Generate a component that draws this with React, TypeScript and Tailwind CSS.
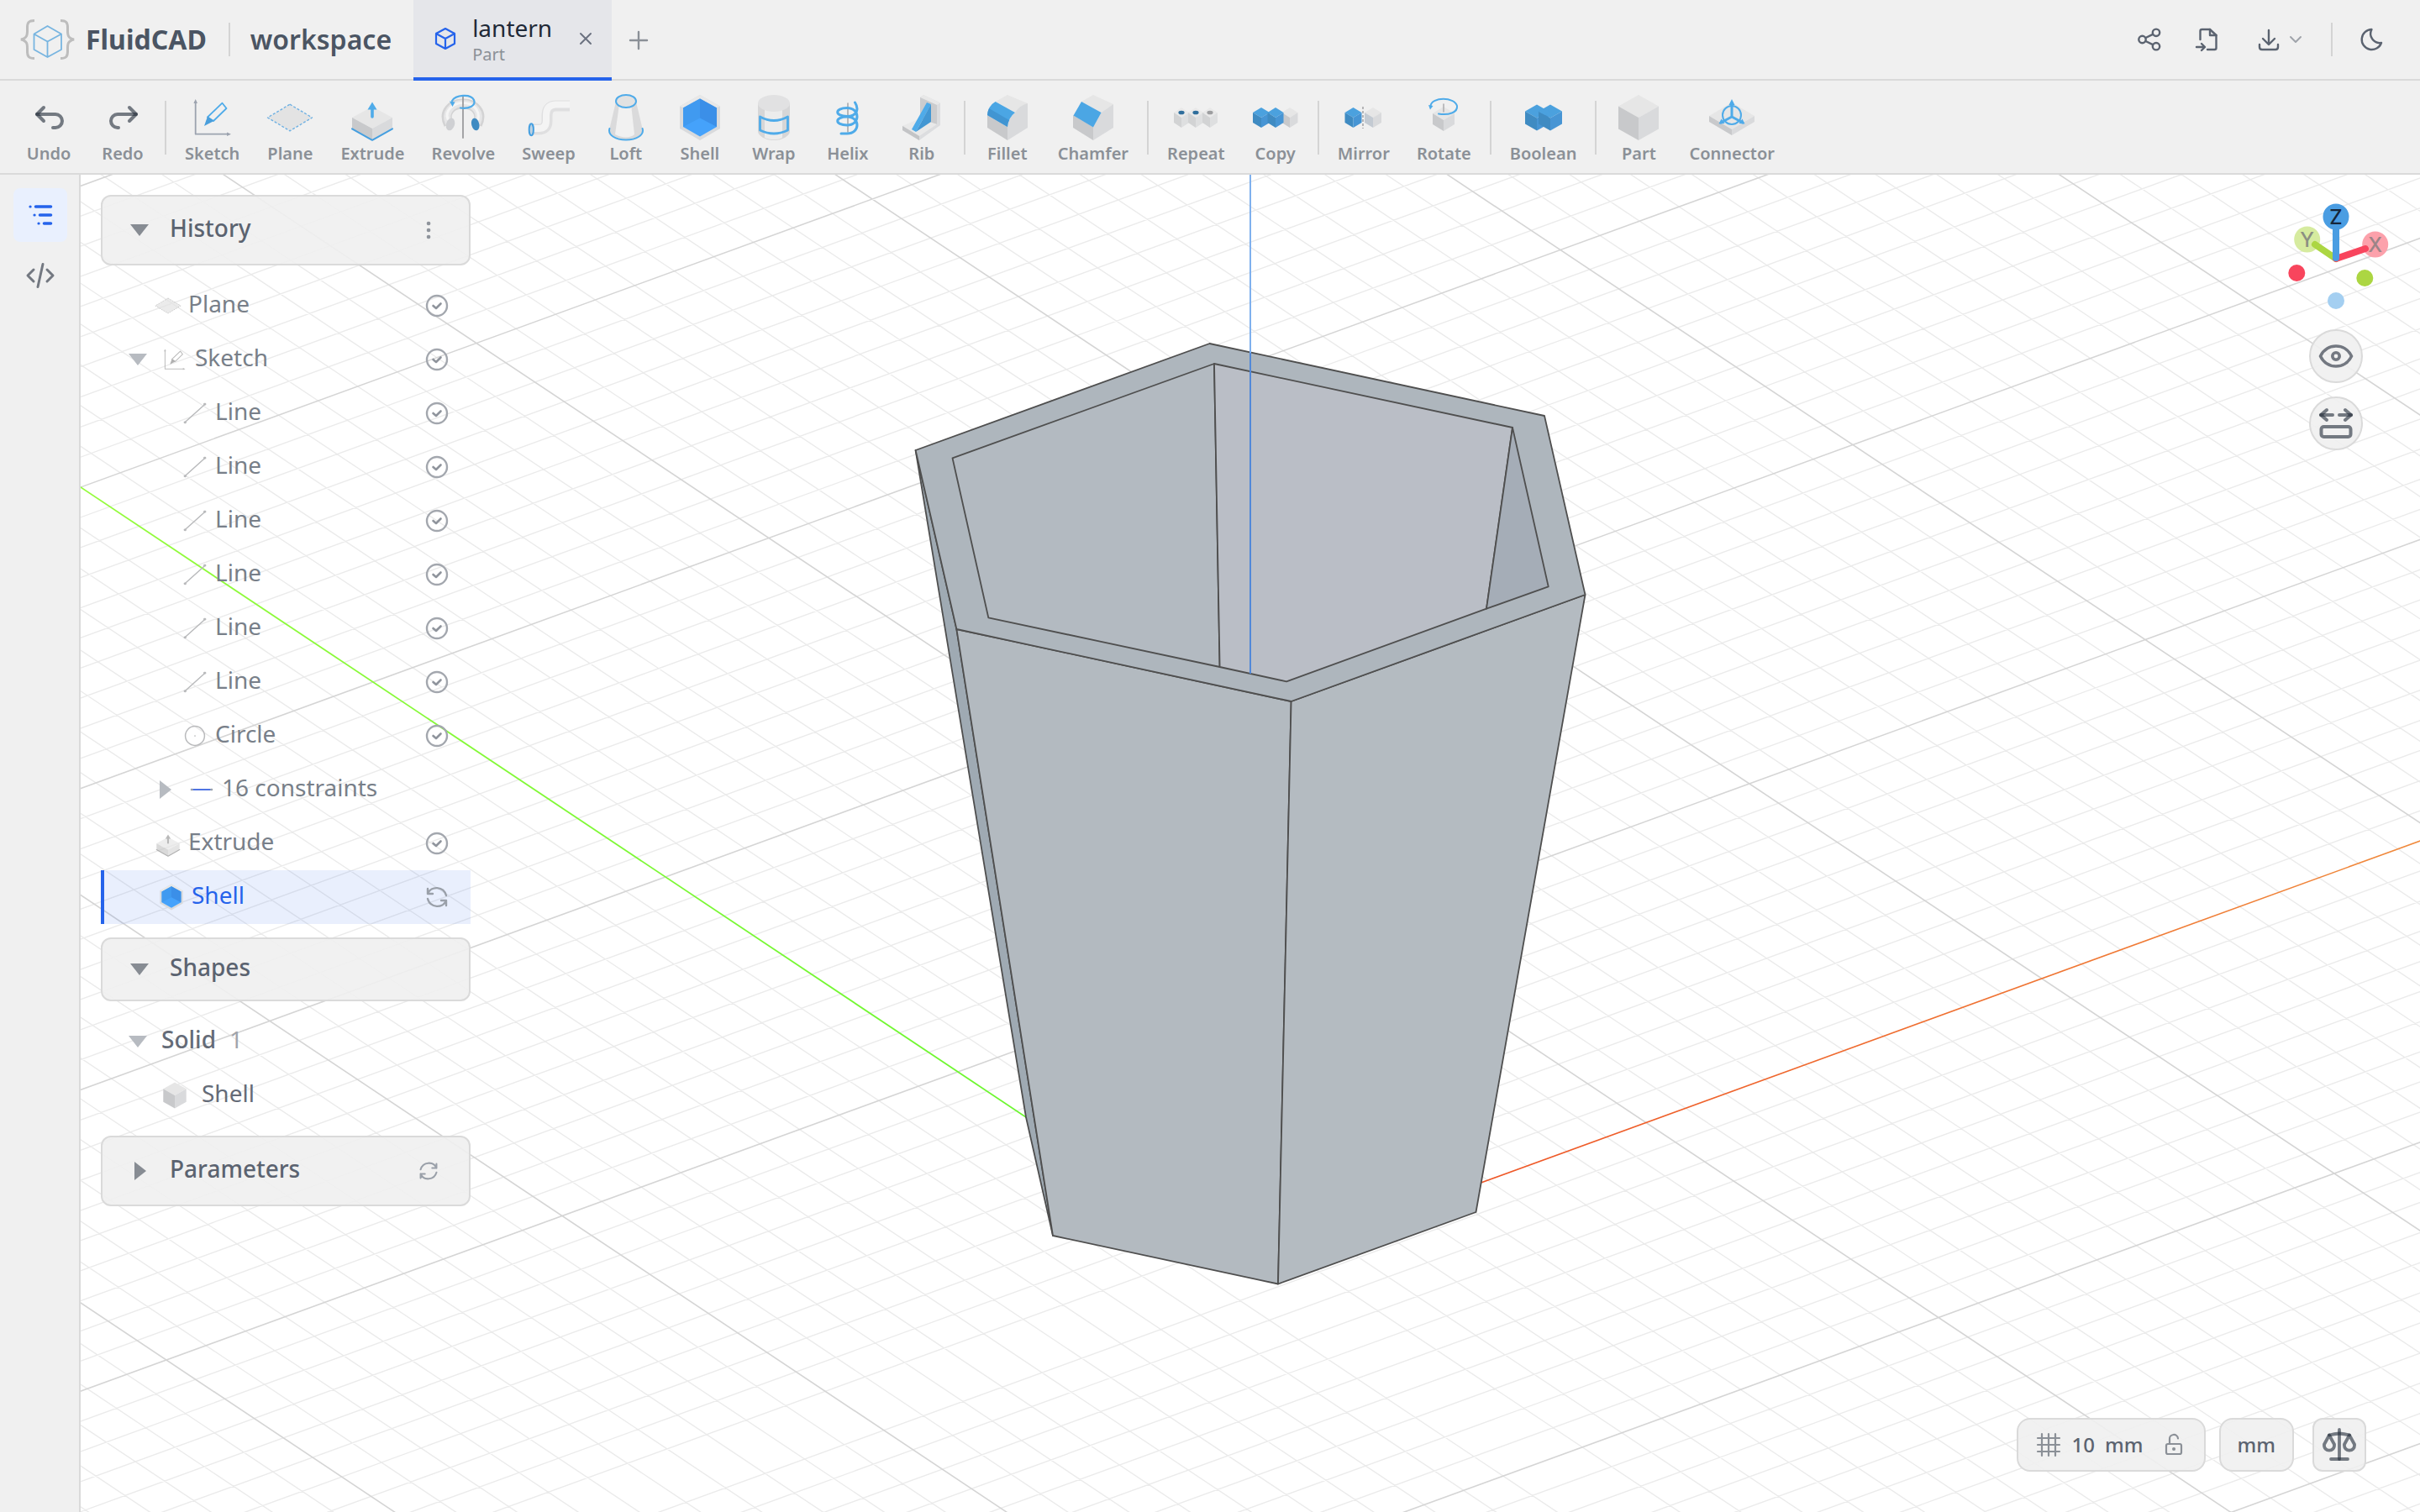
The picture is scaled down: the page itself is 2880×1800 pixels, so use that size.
import { useState } from "react";
import type { ReactNode } from "react";
import clsx from "clsx";

type Tone = { top: string; left: string; right: string };

const GRAY: Tone = { top: "#e6e6e6", left: "#c8c9cb", right: "#d9dadc" };
const LIGHT: Tone = { top: "#e9e9e9", left: "#d2d3d4", right: "#dedfe0" };
const BLUE: Tone = { top: "#4ba1de", left: "#3f8bc2", right: "#4795d4" };

const ACCENT = "#4fabe9";
const INK = "rgba(31,41,55,0.6)";

/* ---------- shared drawing parts ---------- */

// Isometric box: hw is the half width, rise the height of the top rhombus' half.
function Box({
  cx,
  top,
  hw,
  rise,
  height,
  tone = GRAY,
}: {
  cx: number;
  top: number;
  hw: number;
  rise: number;
  height: number;
  tone?: Tone;
}) {
  const l = cx - hw;
  const r = cx + hw;
  const side = top + rise;
  const mid = top + rise * 2;
  return (
    <g>
      <path d={`M${cx} ${top}L${r} ${side}L${cx} ${mid}L${l} ${side}Z`} fill={tone.top} />
      <path d={`M${l} ${side}L${cx} ${mid}V${mid + height}L${l} ${side + height}Z`} fill={tone.left} />
      <path d={`M${r} ${side}L${cx} ${mid}V${mid + height}L${r} ${side + height}Z`} fill={tone.right} />
    </g>
  );
}

function Icon({
  children,
  size = 56,
  className,
}: {
  children: ReactNode;
  size?: number;
  className?: string;
}) {
  return (
    <svg
      viewBox={`0 0 ${size} ${size}`}
      fill="none"
      strokeLinecap="round"
      strokeLinejoin="round"
      className={clsx("shrink-0", className)}
      aria-hidden="true"
    >
      {children}
    </svg>
  );
}

/* ---------- tool drawings, all on a 56 unit square ---------- */

const drawings: Record<string, ReactNode> = {
  Undo: (
    <g stroke={INK} strokeWidth="4">
      <path d="M22 16L14 24L22 32" />
      <path d="M14 24H36a8 8 0 0 1 0 16H33" />
    </g>
  ),
  Redo: (
    <g stroke={INK} strokeWidth="4">
      <path d="M36 16L44 24L36 32" />
      <path d="M44 24H22a8 8 0 0 0 0 16H23" />
    </g>
  ),
  Sketch: (
    <g>
      <path d="M7.7 9V47.7H47" stroke="#9ca3af" strokeWidth="1.8" />
      <path d="M7.7 6L10 11H5.4Z M50 47.7L45 50V45.4Z" fill="#9ca3af" />
      <path d="M39.5 10.7L44.5 17L29 32L22 27.5Z" stroke={ACCENT} strokeWidth="1.8" />
      <path d="M22 26.5L29.5 32L18 38Z" fill="#4a9fdc" />
    </g>
  ),
  Plane: (
    <path
      d="M28 12.2L54.5 28L28 43.8L1.5 28Z"
      fill="#e3e3e3"
      stroke="#6fb1e3"
      strokeWidth="1.4"
      strokeDasharray="3 2"
      strokeLinecap="butt"
    />
  ),
  Extrude: (
    <g>
      <Box cx={28} top={15} hw={24} rise={13} height={13.5} />
      <path d="M4 41.3L28 54.8L52 41.3" stroke="#459fe0" strokeWidth="2" />
      <path d="M28 27V16" stroke={ACCENT} strokeWidth="3.6" />
      <path d="M28 9.5L33.5 18.5H22.5Z" fill={ACCENT} />
    </g>
  ),
  Revolve: (
    <g>
      <path d="M11 36C4 22 14 11.5 28 11.5S52 22 45 36" stroke="#d3d3d4" strokeWidth="12" strokeLinecap="butt" />
      <path d="M11 35C5 22 15 11 28 11S51 22 45 35" stroke="#e6e6e7" strokeWidth="8" strokeLinecap="butt" />
      <path d="M10 30C6 20 16 10.5 28 10.5S48 19 46 30" stroke="#f5f5f5" strokeWidth="3" />
      <ellipse cx="13" cy="36" rx="5" ry="7.5" fill="#cfd0d3" transform="rotate(18 13 36)" />
      <ellipse cx="42.7" cy="36" rx="4.6" ry="7.5" fill="#3f8bc2" transform="rotate(-14 42.7 36)" />
      <path d="M28 3V52" stroke="#9b9b9d" strokeWidth="1.8" />
      <path d="M15 8C19 1 37 -1 41 7C44 14 34 18 25 16.5" stroke={ACCENT} strokeWidth="2.2" />
      <path d="M12 8.5L18.5 9.5L15.5 15Z" fill={ACCENT} />
    </g>
  ),
  Sweep: (
    <g strokeLinecap="butt">
      <path d="M8 42H16Q26 42 26 32V26Q26 14.5 36 14H53" stroke="#dfdfe0" strokeWidth="13" />
      <path d="M8 41H16Q25 41 25 32V25Q25 13 36 12.5H53" stroke="#f4f4f4" strokeWidth="8" />
      <ellipse cx="7.3" cy="42.3" rx="2.6" ry="7" fill="#bfd3e2" stroke="#459fe0" strokeWidth="2" />
    </g>
  ),
  Loft: (
    <g>
      <path d="M16 9L8 43C10 50 18 54 28 54S46 50 48 43L40 9Z" fill="#dadadb" />
      <path d="M20 12L15 48C24 53 34 52 38 48L34 12Z" fill="#f1f1f1" />
      <path d="M8.4 41C6 49 16 54.5 28 54.5S50 49 47.6 41" stroke={ACCENT} strokeWidth="2" />
      <ellipse cx="28" cy="8.5" rx="12" ry="7.5" fill="#e2e2e2" stroke={ACCENT} strokeWidth="2" />
    </g>
  ),
  Shell: (
    <g>
      <path d="M28 1L52 14.5V41L28 55L4 41V14.5Z" fill="#d9dadc" />
      <path d="M28 1L52 14.5L48 16L28 5L8 16L4 14.5Z" fill="#e8e8e8" />
      <path d="M28 5.5L48 16.5V39L28 50.5L8 39V16.5Z" fill="#45a2fb" />
      <path d="M28 5.5L8 16.5V39L28 28.5Z" fill="#409af0" />
      <path d="M28 5.5L48 16.5V39L28 28.5Z" fill="#3b8fe8" />
    </g>
  ),
  Wrap: (
    <g>
      <path d="M9 11V44C9 50 18 55 28 55S47 50 47 44V11Z" fill="#d6d6d7" />
      <path d="M17 14V52C24 55 32 55 38 52V14Z" fill="#ececec" />
      <ellipse cx="28" cy="11" rx="19" ry="10" fill="#e1e1e2" />
      <path d="M11.5 27Q28 36 44.5 27V43Q28 51 11.5 43Z" stroke={ACCENT} strokeWidth="2.8" />
    </g>
  ),
  Helix: (
    <g>
      <path d="M28 11V45" stroke="#a9a9ab" strokeWidth="1.6" />
      <path
        d="M36.5 10C41 17 40 26.5 27 26.5C12 26.5 12 16.5 27 16.5C43 16.5 43 37 27 37C12 37 12 27 27 27C43 27 43 47 27 47H20"
        stroke={ACCENT}
        strokeWidth="3"
      />
    </g>
  ),
  Rib: (
    <g>
      <path d="M30 1L50 10.5V37L25 55L5 43V38L26 31V4Z" fill="#dcdddf" />
      <path d="M30 1L50 10.5L46 13L26 4Z" fill="#e8e8e8" />
      <path d="M26 4L46 13V36L26 31Z" fill="#cbccce" />
      <path d="M5 38L26 29L46 36L25 50Z" fill="#e9e9e9" />
      <path d="M5 38L25 50V55L5 43Z" fill="#c3c4c6" />
      <path d="M34 10L16 42L21 45L39 12Z" fill={ACCENT} />
      <path d="M39 12V33L21 45Z" fill="#4397d3" />
    </g>
  ),
  Fillet: (
    <g>
      <path d="M13.6 9L28 1L52 11L37 22Z" fill="#e6e6e6" />
      <path d="M52 11V40L28 55V39Q29 28 37 22Q43 13 52 11Z" fill="#d9dadc" />
      <path d="M4 25L28 39V55L4 40Z" fill="#c8c9cb" />
      <path d="M13.6 9L37 22Q29 28 28 39L4 25Q5 14 13.6 9Z" fill="#4ba6e4" />
      <path d="M4 25Q4.5 20 6 17L30 31Q28 34 28 39Z" fill="#4195d2" />
    </g>
  ),
  Chamfer: (
    <g>
      <path d="M14 9L28 1L52 12L37.6 22Z" fill="#e6e6e6" />
      <path d="M52 12V40L28 55V39L37.6 22Z" fill="#d9dadc" />
      <path d="M4 25L28 39V55L4 40Z" fill="#c8c9cb" />
      <path d="M14 9L37.6 22L28 39.5L4.5 25.5Z" fill="#4ba6e4" />
    </g>
  ),
  Repeat: (
    <g>
      {[11, 28, 45].map((cx) => (
        <g key={cx}>
          <Box cx={cx} top={16} hw={9} rise={6} height={12} tone={LIGHT} />
          <ellipse cx={cx} cy="22" rx="3.6" ry="2.3" fill={cx === 45 ? "#9d9ea0" : "#2f6e9c"} />
        </g>
      ))}
    </g>
  ),
  Copy: (
    <g>
      <Box cx={45} top={16} hw={9.5} rise={6} height={12} />
      <Box cx={11} top={16} hw={10} rise={6} height={12} tone={BLUE} />
      <Box cx={28} top={16} hw={9.5} rise={6} height={12} tone={BLUE} />
    </g>
  ),
  Mirror: (
    <g>
      <Box cx={15.5} top={16} hw={10} rise={6} height={12} tone={BLUE} />
      <path d="M27 15V41" stroke="#b4b4b6" strokeWidth="2" strokeDasharray="3 2" strokeLinecap="butt" />
      <Box cx={39} top={16} hw={10} rise={6} height={12} tone={{ ...GRAY, left: "#c3cad2" }} />
    </g>
  ),
  Rotate: (
    <g>
      <Box cx={28} top={15} hw={13} rise={8} height={13} />
      <path d="M28 12V21" stroke="#b0b0b2" strokeWidth="1.6" />
      <path d="M12.5 14C14 3 41 3 44 14C45 22 34 25.5 22 23.5" stroke={ACCENT} strokeWidth="2" />
      <path d="M10 13L15.5 14L12 18.5Z" fill={ACCENT} />
    </g>
  ),
  Boolean: (
    <g>
      <Box cx={20} top={12.5} hw={14} rise={8} height={15} tone={BLUE} />
      <Box cx={36} top={12.5} hw={14} rise={8} height={15} tone={BLUE} />
      <path d="M28 17.5L36 21L30 25L22 21Z" fill={BLUE.top} />
    </g>
  ),
  Part: <Box cx={28} top={1} hw={24} rise={13.5} height={27} />,
  Connector: (
    <g>
      <Box cx={28} top={10} hw={27} rise={16} height={7} />
      <circle cx="28" cy="25" r="11" stroke={ACCENT} strokeWidth="2" />
      <path d="M28 27V10M28 27L15 34M28 27L41 34" stroke={ACCENT} strokeWidth="3" />
      <path d="M28 6L31.5 13H24.5Z M12.5 35.5L15.5 29.5L19.5 35Z M43.5 35.5L40.5 29.5L36.5 35Z" fill={ACCENT} />
    </g>
  ),
  Line: (
    <g stroke="#b9babc" strokeWidth="2.6">
      <path d="M8 46L48 10" />
      <path d="M7 47H8M48 9H49" strokeWidth="5" />
    </g>
  ),
  Circle: (
    <g stroke="#b9babc" strokeWidth="2.6">
      <circle cx="28" cy="28" r="20" />
      <path d="M28 28H28.1" strokeWidth="3" />
    </g>
  ),
  Constraint: (
    <g strokeWidth="3.6">
      <path d="M8 28H48" stroke="#4f74e3" />
      <path d="M7 28H8M48 28H49" stroke="#9ca3af" strokeWidth="4.6" />
    </g>
  ),
};

function ToolIcon({ name, className }: { name: string; className?: string }) {
  return <Icon className={className}>{drawings[name]}</Icon>;
}

/* ---------- header ---------- */

function Logo() {
  return (
    <svg viewBox="0 0 66 50" fill="none" className="h-[50px] w-[66px] shrink-0" aria-hidden="true">
      <g stroke="#bdbdbd" strokeWidth="3">
        <path d="M17 2.5C10 2.5 8.5 5 8.5 11C8.5 18 9.5 23 1 25C9.5 27 8.5 32 8.5 39C8.5 45 10 47.5 17 47.5" />
        <path d="M48 2.5C55 2.5 56.5 5 56.5 11C56.5 18 55.5 23 64 25C55.5 27 56.5 32 56.5 39C56.5 45 55 47.5 48 47.5" />
      </g>
      <path
        d="M32.5 9L49 18.5V37L32.5 46L16.5 37V18.5ZM16.5 18.5L32.5 27.5L49 18.5M32.5 27.5V46"
        stroke="#78b5e0"
        strokeWidth="1.8"
        strokeLinejoin="round"
      />
    </svg>
  );
}

function HeaderButton({ label, children }: { label: string; children: ReactNode }) {
  return (
    <button aria-label={label} className="flex h-14 items-center justify-center px-2">
      {children}
    </button>
  );
}

function Header() {
  return (
    <header className="flex h-24 shrink-0 items-stretch border-b-2 border-[#dadada]">
      <div className="flex items-center pl-6">
        <Logo />
        <span className="ml-3 text-[32px] leading-10 font-bold text-[#4b5563]">FluidCAD</span>
        <span className="mr-6 ml-[26px] h-10 w-[2px] bg-[#d4d4d4]" />
        <span className="text-[32px] leading-10 font-semibold text-[#4b5563]">workspace</span>
      </div>

      <nav className="-mb-[2px] ml-[26px] flex items-center" aria-label="Open files">
        <div className="flex h-full w-[236px] items-center border-b-4 border-[#2563eb] bg-[#e5e6ea] pl-6">
          <Icon size={28} className="h-7 w-7">
            <path
              d="M14 2L25 8V20L14 26L3 20V8ZM3 8L14 14L25 8M14 14V26"
              stroke="#2563eb"
              strokeWidth="2.2"
            />
          </Icon>
          <a href="#lantern" className="ml-[18px] flex flex-col gap-0.5">
            <span className="text-[28px] leading-9 text-[#1f2937]">lantern</span>
            <span className="text-[20px] leading-6 text-[#8b9097]">Part</span>
          </a>
          <button aria-label="Close lantern" className="ml-6 flex h-8 w-8 items-center justify-center">
            <Icon size={16} className="h-4 w-4">
              <path d="M2 2L14 14M14 2L2 14" stroke="#6b7280" strokeWidth="2" />
            </Icon>
          </button>
        </div>
        <button aria-label="New file" className="flex h-16 w-16 items-center justify-center">
          <Icon size={24} className="h-6 w-6">
            <path d="M12 2V22M2 12H22" stroke="#8b9097" strokeWidth="2.4" />
          </Icon>
        </button>
      </nav>

      <div className="ml-auto flex items-center pr-8">
        <HeaderButton label="Share">
          <Icon size={36} className="h-9 w-9">
            <g stroke="#5b6370" strokeWidth="2.4">
              <circle cx="9.5" cy="18" r="4.2" />
              <circle cx="26" cy="9.8" r="4.2" />
              <circle cx="26" cy="26.2" r="4.2" />
              <path d="M13.5 16L22 11.8M13.5 20L22 24.2" />
            </g>
          </Icon>
        </HeaderButton>
        <div className="ml-4">
          <HeaderButton label="Import">
            <Icon size={36} className="h-9 w-9">
              <g stroke="#5b6370" strokeWidth="2.4">
                <path d="M10.5 18V8Q10.5 6 12.5 6H22L29.5 13V28Q29.5 30 27.5 30H19" />
                <path d="M22 6V13H29.5M6 27H15M12 23L16 27L12 31" />
              </g>
            </Icon>
          </HeaderButton>
        </div>
        <div className="ml-[22px]">
          <HeaderButton label="Download">
            <Icon size={36} className="h-9 w-9">
              <g stroke="#5b6370" strokeWidth="2.4">
                <path d="M18 7V23M11 17L18 24L25 17" />
                <path d="M7 24V27Q7 30 10 30H26Q29 30 29 27V24" />
              </g>
            </Icon>
            <Icon size={16} className="ml-1.5 h-4 w-4">
              <path d="M2 5L8 11L14 5" stroke="#a0a4ab" strokeWidth="2" />
            </Icon>
          </HeaderButton>
        </div>
        <span className="ml-[26px] h-10 w-[2px] bg-[#d4d4d4]" />
        <div className="ml-5">
          <HeaderButton label="Dark theme">
            <Icon size={36} className="h-9 w-9">
              <path
                d="M18.5 6A12 12 0 1 0 30 22A11 11 0 0 1 18.5 6Z"
                stroke="#5b6370"
                strokeWidth="2.4"
              />
            </Icon>
          </HeaderButton>
        </div>
      </div>
    </header>
  );
}

/* ---------- toolbar ---------- */

const toolGroups = [
  ["Undo", "Redo"],
  ["Sketch", "Plane", "Extrude", "Revolve", "Sweep", "Loft", "Shell", "Wrap", "Helix", "Rib"],
  ["Fillet", "Chamfer"],
  ["Repeat", "Copy"],
  ["Mirror", "Rotate"],
  ["Boolean"],
  ["Part", "Connector"],
];

function Toolbar() {
  return (
    <div role="toolbar" className="flex shrink-0 items-center border-b-2 border-[#dadada] px-4 pt-2 pb-1.5">
      {toolGroups.map((group, i) => (
        <div key={group[0]} className="flex items-center">
          {i > 0 && <span className="mx-2 h-16 w-[2px] bg-[#d4d4d4]" />}
          <div className="flex gap-1">
            {group.map((name) => (
              <button
                key={name}
                className="flex min-w-[84px] flex-col items-center gap-[5px] rounded-lg px-3.5 pt-2 pb-[7px]"
              >
                <ToolIcon name={name} className="h-14 w-14" />
                <span className="text-[20px] leading-5 font-semibold text-[#8b9097]">{name}</span>
              </button>
            ))}
          </div>
        </div>
      ))}
    </div>
  );
}

/* ---------- left rail ---------- */

function Rail() {
  return (
    <aside className="flex w-24 shrink-0 flex-col gap-2 border-r-2 border-[#dadada] bg-[#f0f0f0] pt-4 pl-4">
      <button aria-label="Feature tree" className="flex h-16 w-16 items-center justify-center rounded-lg bg-[#e9f0fe]">
        <Icon size={32} className="h-8 w-8">
          <g stroke="#2563eb" strokeWidth="3.6">
            <path d="M10.5 6H28.5M15.5 16H28.5M20.5 26H28.5" />
            <path d="M4 6H4.1M9 16H9.1M14 26H14.1" strokeWidth="3.2" />
          </g>
        </Icon>
      </button>
      <button aria-label="Code" className="flex h-16 w-16 items-center justify-center rounded-lg">
        <Icon size={36} className="h-9 w-9">
          <g stroke="#737881" strokeWidth="3">
            <path d="M10 11L3 18L10 25M26 11L33 18L26 25M21 4.5L15 31.5" />
          </g>
        </Icon>
      </button>
    </aside>
  );
}

/* ---------- side panels ---------- */

function Caret({ open, className }: { open: boolean; className?: string }) {
  return (
    <svg viewBox="0 0 24 24" className={clsx("h-6 w-6 shrink-0", className)} aria-hidden="true">
      <path d={open ? "M1 5H23L12 19Z" : "M6 1L20 12L6 23Z"} fill="currentColor" />
    </svg>
  );
}

function CheckIcon() {
  return (
    <Icon size={28} className="h-7 w-7">
      <circle cx="14" cy="14" r="12" stroke="#a3a7ae" strokeWidth="2.4" />
      <path d="M9.5 14L13 17L18.5 11.5" stroke="#8f949c" strokeWidth="2.6" />
    </Icon>
  );
}

function SyncIcon({ className }: { className?: string }) {
  return (
    <Icon size={28} className={className}>
      <g stroke="#9aa0a9" strokeWidth="2.4">
        <path d="M3 12C6 1 21 0 25 10M25 4V10H19" />
        <path d="M25 16C22 27 7 28 3 18M3 24V18H9" />
      </g>
    </Icon>
  );
}

function PanelHeader({
  title,
  open,
  onToggle,
  tall = true,
  action,
}: {
  title: string;
  open: boolean;
  onToggle: () => void;
  tall?: boolean;
  action?: ReactNode;
}) {
  return (
    <div
      className={clsx(
        "flex items-center rounded-xl border-2 border-[#dadada] bg-[#f0f0f0]/90 pr-8",
        tall ? "h-[84px]" : "h-[76px]"
      )}
    >
      <button onClick={onToggle} aria-expanded={open} className="flex flex-1 items-center pl-8">
        <Caret open={open} className="text-[#878c93]" />
        <span className="ml-6 pb-1.5 text-[28px] leading-9 font-medium text-[#5b6370]">{title}</span>
      </button>
      {action}
    </div>
  );
}

type Row = { name: string; icon: string; indent: string; muted?: boolean };

const historyRows: Row[] = [
  { name: "Line", icon: "Line", indent: "pl-24" },
  { name: "Line", icon: "Line", indent: "pl-24" },
  { name: "Line", icon: "Line", indent: "pl-24" },
  { name: "Line", icon: "Line", indent: "pl-24" },
  { name: "Line", icon: "Line", indent: "pl-24" },
  { name: "Line", icon: "Line", indent: "pl-24" },
  { name: "Circle", icon: "Circle", indent: "pl-24" },
];

function FeatureRow({
  name,
  icon,
  indent,
  muted,
  lead,
  state = <CheckIcon />,
}: Row & { lead?: ReactNode; state?: ReactNode }) {
  return (
    <li className={clsx("flex h-16 items-center pr-[26px] text-[#787f89]", indent)}>
      {lead}
      <ToolIcon name={icon} className={clsx("h-8 w-8", muted && "opacity-70 grayscale")} />
      <span className="ml-2 flex-1 pb-1.5 text-[28px] leading-9">{name}</span>
      {state}
    </li>
  );
}

function SidePanels() {
  const [historyOpen, setHistoryOpen] = useState(true);
  const [shapesOpen, setShapesOpen] = useState(true);
  const [paramsOpen, setParamsOpen] = useState(false);

  return (
    <div className="relative m-6 flex w-[440px] flex-col gap-4">
      <PanelHeader
        title="History"
        open={historyOpen}
        onToggle={() => setHistoryOpen(!historyOpen)}
        action={
          <button aria-label="History options" className="flex h-8 w-8 items-center justify-center">
            <Icon size={28} className="h-7 w-7">
              <path d="M14 6H14.1M14 14H14.1M14 22H14.1" stroke="#8f949c" strokeWidth="4.6" />
            </Icon>
          </button>
        }
      />
      {historyOpen && (
        <ul>
          <FeatureRow name="Plane" icon="Plane" indent="pl-16" muted />
          <FeatureRow
            name="Sketch"
            icon="Sketch"
            indent="pl-8"
            muted
            lead={<Caret open className="mr-4 text-[#b7bbc1]" />}
          />
          {historyRows.map((row, i) => (
            <FeatureRow key={i} {...row} />
          ))}
          <FeatureRow
            name="16 constraints"
            icon="Constraint"
            indent="pl-16"
            lead={<Caret open={false} className="mr-4 text-[#b7bbc1]" />}
            state={null}
          />
          <FeatureRow name="Extrude" icon="Extrude" indent="pl-16" muted />
          <li className="flex h-16 items-center border-l-4 border-[#2563eb] bg-[#2563eb]/10 pr-[26px] pl-16 text-[#2563eb]">
            <ToolIcon name="Shell" className="h-8 w-8" />
            <span className="ml-2 flex-1 pb-1.5 text-[28px] leading-9">Shell</span>
            <SyncIcon className="h-7 w-7 -scale-x-100" />
          </li>
        </ul>
      )}

      <PanelHeader title="Shapes" open={shapesOpen} onToggle={() => setShapesOpen(!shapesOpen)} tall={false} />
      {shapesOpen && (
        <ul className="text-[28px] leading-9 text-[#646b77]">
          <li className="flex h-16 items-center pl-8">
            <Caret open className="text-[#b7bbc1]" />
            <span className="ml-4 pb-1.5 font-medium">Solid</span>
            <span className="ml-4 pb-1.5 text-[#a0a4ab]">1</span>
          </li>
          <li className="flex h-16 items-center pl-[72px]">
            <ToolIcon name="Part" className="h-8 w-8" />
            <span className="ml-4 pb-1.5">Shell</span>
          </li>
        </ul>
      )}

      <PanelHeader
        title="Parameters"
        open={paramsOpen}
        onToggle={() => setParamsOpen(!paramsOpen)}
        action={
          <button aria-label="Refresh parameters" className="flex h-8 w-8 items-center justify-center">
            <SyncIcon className="h-6 w-6" />
          </button>
        }
      />
    </div>
  );
}

/* ---------- 3D scene ---------- */

// Orthographic projection of the ground plane; one step is a major grid cell.
const ORIGIN = [1488, 1508];
const STEP_X = [471, -171.5];
const STEP_Y = [-348, -232];

function project(x: number, y: number) {
  return `${(ORIGIN[0] + x * STEP_X[0] + y * STEP_Y[0]).toFixed(1)} ${(
    ORIGIN[1] +
    x * STEP_X[1] +
    y * STEP_Y[1]
  ).toFixed(1)}`;
}

function gridPath(major: boolean) {
  const parts: string[] = [];
  for (let i = -60; i <= 60; i++) {
    if (i === 0 || (i % 10 === 0) !== major) continue;
    const t = i / 10;
    parts.push(`M${project(t, -6)}L${project(t, 8)}`);
    parts.push(`M${project(-8, t)}L${project(8, t)}`);
  }
  return parts.join("");
}

const minorGrid = gridPath(false);
const majorGrid = gridPath(true);

function Scene() {
  return (
    <svg
      viewBox="96 208 2784 1592"
      preserveAspectRatio="xMidYMid slice"
      className="absolute inset-0 h-full w-full"
      role="img"
      aria-label="Hexagonal lantern model"
    >
      <defs>
        <linearGradient id="xAxis" gradientUnits="userSpaceOnUse" x1="1488" y1="0" x2="2880" y2="0">
          <stop offset="0" stopColor="#ee4a22" />
          <stop offset="1" stopColor="#f08a3c" />
        </linearGradient>
        <linearGradient id="yAxis" gradientUnits="userSpaceOnUse" x1="96" y1="0" x2="1488" y2="0">
          <stop offset="0" stopColor="#95fb3c" />
          <stop offset="1" stopColor="#62f52c" />
        </linearGradient>
      </defs>

      <g fill="none">
        <path d={minorGrid} stroke="#ebebeb" strokeWidth="1.4" />
        <path d={majorGrid} stroke="#d5d5d5" strokeWidth="1.6" />
        <path d={`M${project(0, 0)}L${project(4, 0)}`} stroke="url(#xAxis)" strokeWidth="1.6" />
        <path d={`M${project(0, 0)}L${project(0, 5)}`} stroke="url(#yAxis)" strokeWidth="1.8" />
      </g>

      <g stroke="#4f4f4f" strokeWidth="1.8" strokeLinejoin="round">
        <path d="M1089.6 536L1138.4 749L1253 1471L1221 1330Z" fill="#9faab3" />
        <path d="M1138.4 749L1536.6 835L1521 1528.5L1253 1471Z" fill="#b3bac0" />
        <path d="M1536.6 835L1886.5 708L1756.5 1443L1521 1528.5Z" fill="#b4bbc1" />
        <path d="M1439.5 409L1838 495L1886.5 708L1536.6 835L1138.4 749L1089.6 536Z" fill="#aeb6bd" />
        <path d="M1445 433L1451.6 794L1176.3 735.3L1133.5 545.3Z" fill="#b3bac1" />
        <path d="M1445 433L1800 509L1769 724.7L1531 811.3L1451.6 794Z" fill="#babec6" />
        <path d="M1800 509L1842.7 698.3L1769 724.7Z" fill="#a5adb7" />
      </g>

      <path d="M1488 208V420" stroke="#7fb0ee" strokeWidth="2" />
      <path d="M1488 420V802" stroke="#5288d8" strokeWidth="2" />
    </svg>
  );
}

/* ---------- viewport overlays ---------- */

function AxisGizmo() {
  return (
    <svg viewBox="0 0 140 140" className="h-[140px] w-[140px]" role="img" aria-label="View orientation">
      <circle cx="35.7" cy="45" r="15.5" fill="#d6eb9f" />
      <circle cx="116.7" cy="51" r="15.5" fill="#fca1ab" />
      <g strokeWidth="8" strokeLinecap="round">
        <path d="M70 68L45 51" stroke="#acd642" />
        <path d="M70 68L105 56" stroke="#f8455d" />
        <path d="M70 67V20" stroke="#4a9de2" />
      </g>
      <circle cx="70" cy="18" r="15.5" fill="#4a9de2" />
      <circle cx="23.3" cy="85" r="10" fill="#f8455d" />
      <circle cx="104.3" cy="91" r="10" fill="#acd642" />
      <circle cx="70" cy="118" r="10" fill="#a4cff1" />
      <g textAnchor="middle" fontSize="24" className="font-[Inter]" fontWeight="500">
        <text x="70" y="27" fill="#16263a">Z</text>
        <text x="35.7" y="54" fill="#8b8f82">Y</text>
        <text x="116.7" y="60" fill="#9c8487">X</text>
      </g>
    </svg>
  );
}

function ViewControls() {
  const round =
    "flex h-16 w-16 items-center justify-center rounded-full border-2 border-[#dadada] bg-[#f0f0f0]/90";
  return (
    <div className="relative mt-8 mr-[30px] flex flex-col items-center gap-3 self-start">
      <AxisGizmo />
      <div className="flex flex-col gap-4">
        <button aria-label="Display mode" className={round}>
          <Icon size={44} className="h-11 w-11">
            <g stroke="#737881" strokeWidth="3.6">
              <path d="M3.5 22C11 6 33 6 40.5 22C33 38 11 38 3.5 22Z" />
              <circle cx="22" cy="22" r="4.2" />
            </g>
          </Icon>
        </button>
        <button aria-label="Measure" className={round}>
          <Icon size={44} className="h-11 w-11">
            <g stroke={INK} strokeWidth="4">
              <path d="M11 6L4 12L11 18" />
              <path d="M4 12H18" />
              <path d="M33 6L40 12L33 18" />
              <path d="M40 12H26" />
              <rect x="4.5" y="26" width="35" height="12" rx="3" />
            </g>
          </Icon>
        </button>
      </div>
    </div>
  );
}

function StatusControls() {
  const pill =
    "flex h-16 items-center border-2 border-[#dadada] bg-[#f0f0f0]/90 text-[24px] leading-8 font-medium text-[#5b6370]";
  return (
    <div className="absolute right-16 bottom-12 flex items-center">
      <button aria-label="Grid size 10 mm" className={clsx(pill, "rounded-2xl px-5")}>
        <Icon size={32} className="h-8 w-8">
          <path
            d="M8 3V29M16 3V29M24 3V29M3 8H29M3 16H29M3 24H29"
            stroke="#8b9097"
            strokeWidth="2.2"
          />
        </Icon>
        <span className="ml-3">10</span>
        <span className="ml-3">mm</span>
        <Icon size={32} className="ml-5 h-8 w-8">
          <g stroke="#8b9097" strokeWidth="2.2">
            <rect x="7" y="15" width="18" height="12" rx="2" />
            <path d="M11 15V9.5A5 5 0 0 1 21 8.5" />
            <path d="M16 21H16.1" strokeWidth="4" />
          </g>
        </Icon>
      </button>
      <button aria-label="Units" className={clsx(pill, "ml-4 rounded-2xl px-5")}>
        mm
      </button>
      <button aria-label="Mass properties" className={clsx(pill, "ml-[22px] w-16 justify-center rounded-xl")}>
        <Icon size={44} className="h-11 w-11">
          <g stroke={INK} strokeWidth="3.8">
            <path d="M22 4V39" />
            <path d="M12 39H32" />
            <path d="M10 10.5Q16 9 22 8.5Q28 9 34 10.5" />
            <path d="M10 10.5L4 21.5C3 31 17 31 16 21.5L10 10.5Z" />
            <path d="M34 10.5L28 21.5C27 31 41 31 40 21.5L34 10.5Z" />
          </g>
        </Icon>
      </button>
    </div>
  );
}

export default function App() {
  return (
    <div className="flex min-h-screen flex-col bg-[#f0f0f0] font-['Noto_Sans','Open_Sans',sans-serif]">
      <Header />
      <Toolbar />
      <div className="flex flex-1">
        <Rail />
        <main className="relative flex flex-1 justify-between overflow-hidden bg-white">
          <Scene />
          <SidePanels />
          <ViewControls />
          <StatusControls />
        </main>
      </div>
    </div>
  );
}
